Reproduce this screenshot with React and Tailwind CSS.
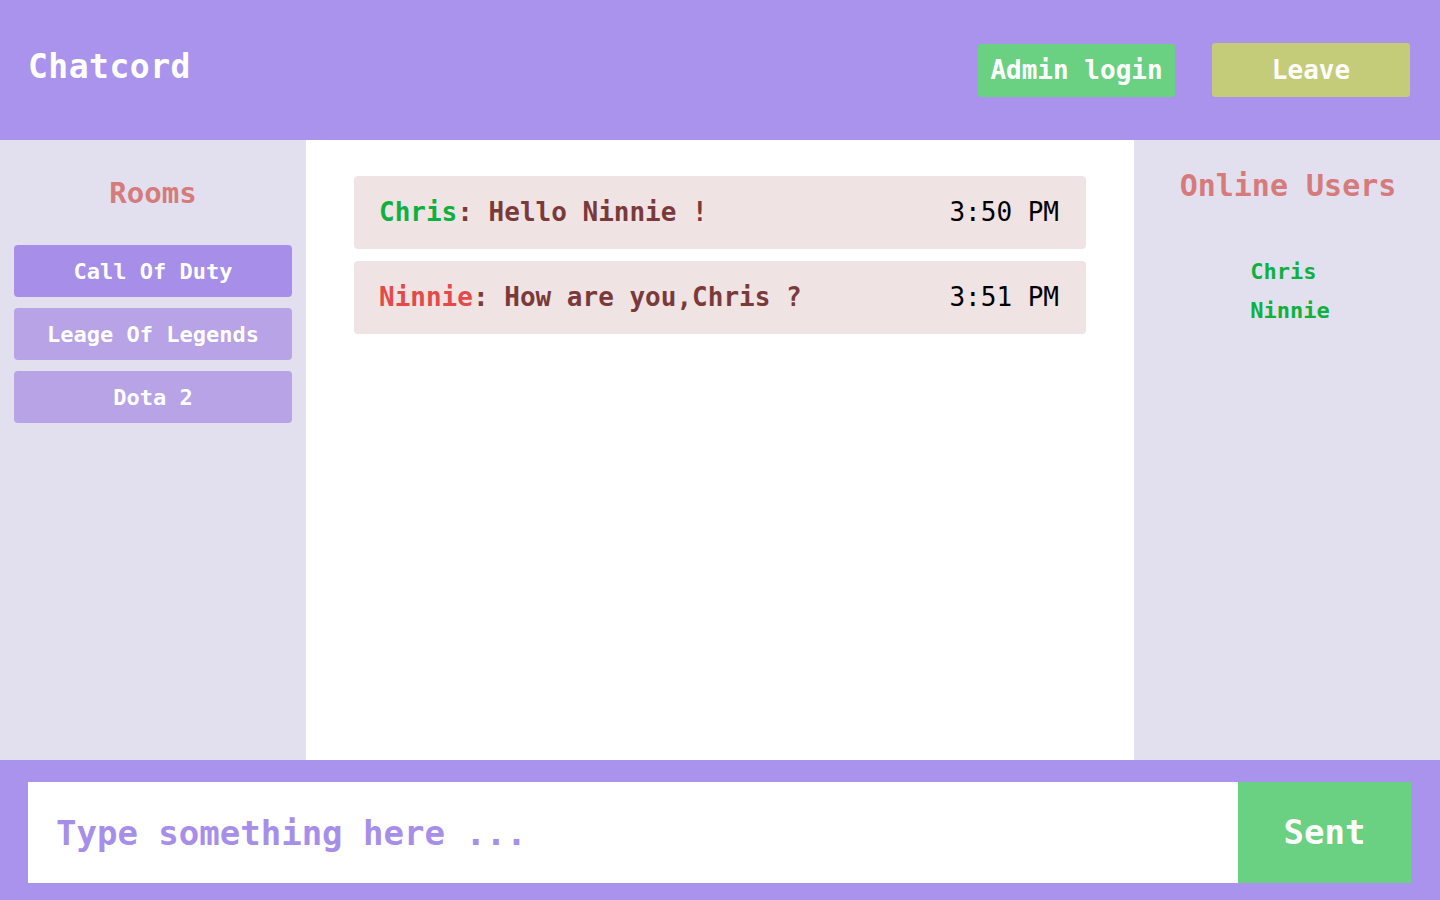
import React from "react";

const mono = "font-['DejaVu_Sans_Mono',monospace]";

export default function App() {
  const rooms = [
    { name: "Call Of Duty", active: true },
    { name: "Leage Of Legends", active: false },
    { name: "Dota 2", active: false },
  ];
  return (
    <div className={`w-[1440px] h-[900px] flex flex-col ${mono}`}>
      <header className="h-[140px] bg-[#a993ec] flex items-start justify-between pl-[28px] pr-[30px]">
        <h1 className="mt-[46px] text-[33px] font-bold text-white tracking-[0.5px] leading-[42px]">Chatcord</h1>
        <div className="flex items-start gap-[37px] mt-[43px]">
          <button className="mt-[1px] w-[197px] h-[53px] rounded-[3px] bg-[#6ad082] text-white text-[26px] font-bold">Admin login</button>
          <button className="w-[198px] h-[54px] rounded-[3px] bg-[#c4cc7a] text-white text-[26px] font-bold">Leave</button>
        </div>
      </header>
      <div className="h-[620px] flex">
        <aside className="w-[306px] bg-[#e2e0ee] px-[14px]">
          <h2 className="mt-[34px] text-center text-[29px] font-bold text-[#d67b7b] leading-[38px]">Rooms</h2>
          <div className="mt-[33px] flex flex-col gap-[11px]">
            {rooms.map((r) => (
              <button
                key={r.name}
                className={`h-[52px] rounded-[4px] text-white text-[22px] font-bold ${r.active ? "bg-[#a78ee9]" : "bg-[#b7a3e6]"}`}
              >
                {r.name}
              </button>
            ))}
          </div>
        </aside>
        <main className="flex-1 bg-white px-[48px] pt-[36px] flex flex-col gap-[12px]">
          <div className="h-[73px] rounded-[4px] bg-[#efe3e4] flex items-center justify-between pl-[25px] pr-[27px] text-[26px]">
            <span className="font-bold text-[#7b3a3a]"><span className="text-[#0eb13e]">Chris</span>: Hello Ninnie !</span>
            <span className="text-black">3:50 PM</span>
          </div>
          <div className="h-[73px] rounded-[4px] bg-[#efe3e4] flex items-center justify-between pl-[25px] pr-[27px] text-[26px]">
            <span className="font-bold text-[#7b3a3a]"><span className="text-[#e34a4a]">Ninnie</span>: How are you,Chris ?</span>
            <span className="text-black">3:51 PM</span>
          </div>
        </main>
        <aside className="w-[306px] bg-[#e2e0ee] flex flex-col items-center">
          <h2 className="mt-[27px] text-[30px] font-bold text-[#d67b7b] leading-[38px] pl-[2px]">Online Users</h2>
          <ul className="mt-[54px] flex flex-col gap-[13px] text-[22px] font-bold text-[#0eb13e] leading-[26px] pl-[6px]">
            <li>Chris</li>
            <li>Ninnie</li>
          </ul>
        </aside>
      </div>
      <footer className="h-[140px] bg-[#a993ec] pl-[28px] pr-[29px] pt-[22px] pb-[17px] flex">
        <input
          className="flex-1 h-[101px] bg-white pl-[28px] text-[34px] font-bold text-[#a78ee9] placeholder:text-[#a78ee9] outline-none"
          placeholder="Type something here ..."
        />
        <button className="w-[173px] h-[101px] bg-[#6ad082] text-white text-[34px] font-bold">Sent</button>
      </footer>
    </div>
  );
}
